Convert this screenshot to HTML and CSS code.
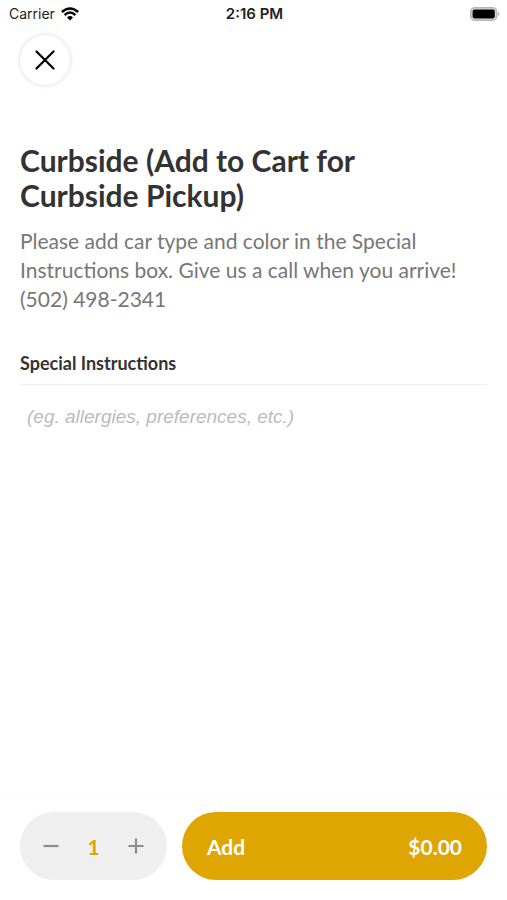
FILE: index.html
```
<!DOCTYPE html>
<html lang="en">
<head>
  <meta charset="UTF-8">
  <meta name="viewport" content="width=device-width, initial-scale=1.0">
  <title>Curbside Pickup</title>
  <link rel="stylesheet" href="styles.css">
</head>
<body>
  <header class="status-bar">
    <div class="carrier">
      <span>Carrier</span>
      <svg class="wifi" width="18" height="14" viewBox="0 0 18 14">
        <path d="M0.8 5 Q9 -2.2 17.2 5 M3.6 8 Q9 3.2 14.4 8" fill="none" stroke="#000" stroke-width="2.4"/>
        <path d="M6 10.4 Q9 7.8 12 10.4 L9 13.5 Z" fill="#000"/>
      </svg>
    </div>
    <div class="clock">2:16 PM</div>
    <svg class="battery" width="30" height="14" viewBox="0 0 30 14">
      <rect x="0.8" y="0.8" width="25.8" height="12.4" rx="4" fill="#ddd" stroke="#b5b5b5" stroke-width="1.6"/>
      <rect x="2.6" y="2.6" width="22.2" height="8.8" rx="1.8" fill="#000"/>
      <path d="M28 4.8 Q31 7 28 9.2 Z" fill="#b5b5b5"/>
    </svg>
  </header>

  <main class="item">
    <button class="close-btn" aria-label="Close">
      <svg width="20" height="20" viewBox="0 0 20 20">
        <path d="M1.5 1.5 L18.5 18.5 M18.5 1.5 L1.5 18.5" stroke="#000" stroke-width="2.2" stroke-linecap="round"/>
      </svg>
    </button>
    <h1 class="item-title">Curbside (Add to Cart for Curbside Pickup)</h1>
    <p class="item-text">Please add car type and color in the Special Instructions box. Give us a call when you arrive! (502) 498-2341</p>
    <label class="notes-label" for="notes">Special Instructions</label>
    <textarea class="notes" id="notes" placeholder="(eg. allergies, preferences, etc.)"></textarea>
  </main>

  <footer class="cart-bar">
    <div class="stepper">
      <button id="minus" aria-label="Decrease quantity">
        <svg width="16" height="16" viewBox="0 0 16 16"><path d="M0.5 8 H15.5" stroke="#8c8c8c" stroke-width="2.2"/></svg>
      </button>
      <output id="qty">1</output>
      <button id="plus" aria-label="Increase quantity">
        <svg width="16" height="16" viewBox="0 0 16 16"><path d="M0.5 8 H15.5 M8 0.5 V15.5" stroke="#8c8c8c" stroke-width="2.2"/></svg>
      </button>
    </div>
    <button class="add-btn"><span>Add</span><span>$0.00</span></button>
  </footer>

<script>
  const qty = document.getElementById('qty');

  document.getElementById('minus').onclick = () => {
    qty.textContent = Math.max(1, Number(qty.textContent) - 1);
  };
  document.getElementById('plus').onclick = () => {
    qty.textContent = Number(qty.textContent) + 1;
  };
</script>
</body>
</html>
```
FILE: styles.css
```
* {
  box-sizing: border-box;
}
body {
  display: flex;
  flex-direction: column;
  min-height: 100vh;
  margin: 0;
  background-color: #fff;
  color: #333;
  font-family: Lato, sans-serif;
}
button {
  border: none;
  padding: 0;
  font-family: inherit;
  cursor: pointer;
}
.status-bar {
  display: grid;
  grid-template-columns: 1fr auto 1fr;
  align-items: center;
  height: 27px;
  padding: 0 7px 0 9px;
  color: #222;
  font-family: Inter, sans-serif;
  font-size: 14px;
}
.carrier {
  display: flex;
  align-items: center;
  gap: 6px;
}
.clock {
  font-size: 15px;
  font-weight: 600;
}
.battery {
  justify-self: end;
}
.item {
  flex: 1;
  display: flex;
  flex-direction: column;
  padding: 8px 20px 0;
}
.close-btn {
  display: flex;
  align-items: center;
  justify-content: center;
  width: 50px;
  height: 50px;
  border-radius: 50%;
  background-color: #fff;
  box-shadow: 0 0 5px rgba(0, 0, 0, 0.16);
}
.item-title {
  max-width: 400px;
  margin: 58px 0 13px;
  font-size: 30px;
  line-height: 35px;
}
.item-text {
  margin: 0 0 38px;
  color: #777;
  font-size: 21px;
  line-height: 29px;
}
.notes-label {
  padding-bottom: 9px;
  border-bottom: 1px solid #eee;
  font-size: 18px;
  font-weight: bold;
  line-height: 24px;
}
.notes {
  flex: 1;
  border: none;
  padding: 20px 7px;
  font-family: "Liberation Sans", Arial, sans-serif;
  font-size: 19px;
  line-height: 24px;
  resize: none;
  outline: none;
}
.notes::placeholder {
  color: #bbb;
  font-style: italic;
}
.cart-bar {
  display: flex;
  gap: 15px;
  padding: 16px 20px 20px;
  border-top: 1px solid #fcfcfc;
}
.stepper {
  display: flex;
  align-items: center;
  justify-content: space-between;
  width: 147px;
  height: 68px;
  padding: 0 23px;
  border-radius: 34px;
  background-color: #efefef;
}
.stepper button {
  display: flex;
  background: none;
}
.stepper output {
  color: #dfa500;
  font-size: 21px;
  font-weight: bold;
}
.add-btn {
  flex: 1;
  display: flex;
  align-items: center;
  justify-content: space-between;
  padding: 0 25px;
  border-radius: 34px;
  background-color: #dfa500;
  color: #fff;
  font-size: 21px;
  font-weight: bold;
}
```
